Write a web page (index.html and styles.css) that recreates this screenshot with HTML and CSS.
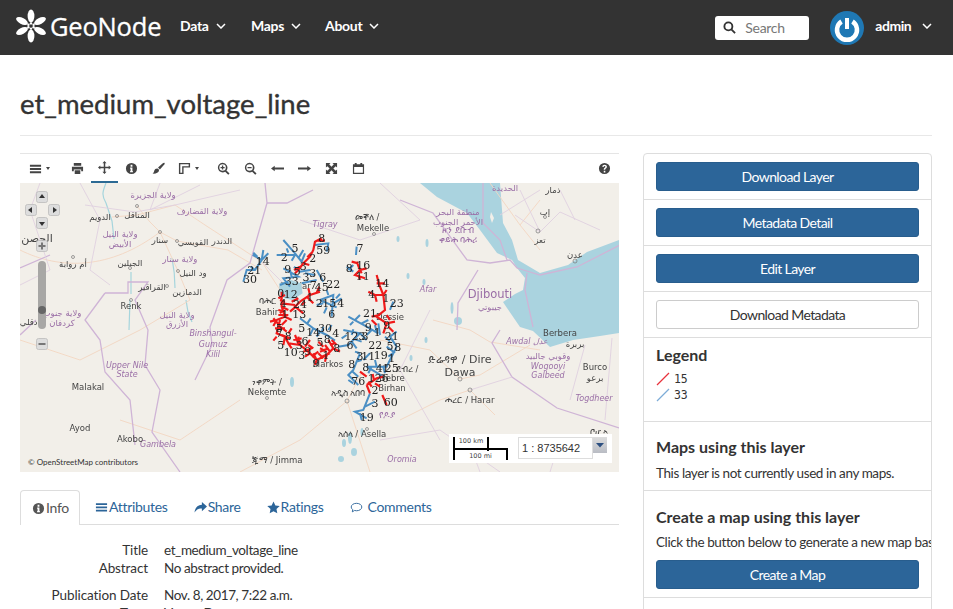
FILE: index.html
```html
<!DOCTYPE html>
<html lang="en">
<head>
<meta charset="utf-8">
<title>et_medium_voltage_line</title>
<link rel="stylesheet" href="styles.css">
</head>
<body>
<header class="navbar">
  <a class="brand">
    <svg class="brand-mark" viewBox="0 0 32 34" width="32" height="34">
      <g fill="#fff">
        <ellipse cx="16" cy="7" rx="3.4" ry="6.4"/>
        <ellipse cx="16" cy="27" rx="3.4" ry="6.4"/>
        <ellipse cx="7" cy="12" rx="3.2" ry="6.4" transform="rotate(-62 7 12)"/>
        <ellipse cx="25" cy="12" rx="3.2" ry="6.4" transform="rotate(62 25 12)"/>
        <ellipse cx="7" cy="22" rx="3.2" ry="6.4" transform="rotate(62 7 22)"/>
        <ellipse cx="25" cy="22" rx="3.2" ry="6.4" transform="rotate(-62 25 22)"/>
        <circle cx="16" cy="14.4" r="1.2"/><circle cx="16" cy="19.6" r="1.2"/>
        <circle cx="13.4" cy="15.7" r="1.2"/><circle cx="18.6" cy="15.7" r="1.2"/>
        <circle cx="13.4" cy="18.3" r="1.2"/><circle cx="18.6" cy="18.3" r="1.2"/>
      </g>
    </svg>
    <span class="brand-name">GeoNode</span>
  </a>
  <nav class="nav-main">
    <a class="nav-link">Data <svg class="chev" viewBox="0 0 10 6"><path d="M1 1l4 4 4-4"/></svg></a>
    <a class="nav-link nav-maps">Maps <svg class="chev" viewBox="0 0 10 6"><path d="M1 1l4 4 4-4"/></svg></a>
    <a class="nav-link">About <svg class="chev" viewBox="0 0 10 6"><path d="M1 1l4 4 4-4"/></svg></a>
  </nav>
  <div class="search">
    <svg class="search-icon" viewBox="0 0 14 14"><circle cx="5.8" cy="5.8" r="4.3"/><path d="M9 9l4 4"/></svg>
    <span class="search-text">Search</span>
  </div>
  <div class="avatar">
    <svg viewBox="0 0 34 34" width="34" height="34">
      <circle cx="17" cy="17" r="17" fill="#1f78b4"/>
      <path d="M11.500 10.500a10 10 0 1 0 11 0" fill="none" stroke="#fff" stroke-width="4.500"/>
      <path d="M17 7v11" stroke="#fff" stroke-width="4" fill="none"/>
    </svg>
  </div>
  <a class="nav-user">admin <svg class="chev" viewBox="0 0 10 6"><path d="M1 1l4 4 4-4"/></svg></a>
</header>

<main class="page">
  <h1 class="title">et_medium_voltage_line</h1>
  <div class="columns">
    <section class="left">
      <div class="toolbar">
        <span class="tool tool-wide tool-menu">
          <svg viewBox="0 0 14 14"><path d="M1 3h12v2H1zM1 6.500h12v2H1zM1 10h12v2H1z"/></svg><i class="caret"></i>
        </span>
        <span class="tool"><svg viewBox="0 0 14 14"><path d="M3 1h8v3H3zM1 5h12v5h-2V8H3v2H1zM4 9h6v4H4z"/></svg></span>
        <span class="tool tool-active"><svg viewBox="0 0 14 14"><path d="M7 0l2.200 2.500H7.800v3.700h3.700V4.800L14 7l-2.500 2.200V7.800H7.800v3.700h1.400L7 14l-2.200-2.500h1.400V7.800H2.500v1.400L0 7l2.500-2.200v1.400h3.700V2.500H4.800z"/></svg></span>
        <span class="tool"><svg viewBox="0 0 14 14"><path fill-rule="evenodd" d="M7 1a6 6 0 1 1 0 12A6 6 0 0 1 7 1zM6 3v2h2V3zM5.500 6v1.200H6v2.600h-.5V11h3V9.800H8V6z"/></svg></span>
        <span class="tool"><svg viewBox="0 0 14 14"><path d="M13.500 1c.5.500 0 1.500-1 2.500L8.500 8 6.500 6l4.500-4c1-.8 2-1.500 2.500-1zM5.500 7c1.500 0 2.300 1.200 2 2.500C7 11.500 4 13 .5 12.500c1.500-.8 1.500-2 2-3.300C3 8 4 7 5.500 7z"/></svg></span>
        <span class="tool tool-wide">
          <svg viewBox="0 0 14 14"><path fill-rule="evenodd" d="M1 1h12v5H6v7H1zM2.500 2.500v9h2V4.500h7v-2z"/></svg><i class="caret"></i>
        </span>
        <span class="tool"><svg viewBox="0 0 14 14"><path fill-rule="evenodd" d="M6 .8a5.200 5.200 0 0 1 4.200 8.300l3.300 3.300-1.400 1.400-3.300-3.300A5.200 5.200 0 1 1 6 .8zm0 1.700a3.500 3.500 0 1 0 0 7 3.500 3.500 0 0 0 0-7zM5.300 3.800h1.400v1.500h1.500v1.400H6.700v1.500H5.300V6.700H3.800V5.300h1.500z"/></svg></span>
        <span class="tool"><svg viewBox="0 0 14 14"><path fill-rule="evenodd" d="M6 .8a5.200 5.200 0 0 1 4.200 8.300l3.300 3.300-1.400 1.400-3.300-3.300A5.200 5.200 0 1 1 6 .8zm0 1.700a3.500 3.500 0 1 0 0 7 3.500 3.500 0 0 0 0-7zM3.800 5.300h4.400v1.400H3.800z"/></svg></span>
        <span class="tool"><svg viewBox="0 0 14 14"><path d="M0 7l4-3v2h10v2H4v2z"/></svg></span>
        <span class="tool"><svg viewBox="0 0 14 14"><path d="M14 7l-4-3v2H0v2h10v2z"/></svg></span>
        <span class="tool"><svg viewBox="0 0 14 14"><path d="M1 1h5L4.500 2.500 7 5l2.500-2.500L8 1h5v5l-1.500-1.500L9 7l2.500 2.500L13 8v5H8l1.500-1.500L7 9l-2.500 2.500L6 13H1V8l1.500 1.500L5 7 2.500 4.500 1 6z"/></svg></span>
        <span class="tool"><svg viewBox="0 0 14 14"><path fill-rule="evenodd" d="M1 2.500h2V1h2v1.500h4V1h2v1.500h2V13H1zM2.300 5.500v6.200h9.400V5.500z"/></svg></span>
        <span class="tool tool-help"><svg viewBox="0 0 14 14"><path fill-rule="evenodd" d="M7 1a6 6 0 1 1 0 12A6 6 0 0 1 7 1zM6.200 9.500v1.700h1.700V9.500zM7.100 3C5.700 3 4.800 3.800 4.600 5l1.500.3c.1-.6.400-.9 1-.9s.9.300.9.700c0 .4-.3.600-.8 1-.7.500-1 1-1 2v.2h1.600c0-.7.100-.9.800-1.400.6-.5 1-1 1-1.800C9.600 3.800 8.600 3 7.100 3z"/></svg></span>
      </div>

      <div class="map">
        <svg class="map-canvas" viewBox="20 183 599 289" width="599" height="289">
          <rect class="land" x="20" y="183" width="599" height="289"/>
          <path class="sea" d="M420,183L437,197L467,213L480,230L497,253L512,260L517,268L525,278L523,290L515,294L503,302L507,308L520,327L533,331L550,347L573,340L600,336L619,333L619,240L587,252L568,265L540,273L518,260L512,240L503,223L500,183Z"/>
          <path class="land" d="M491,212l3,6-2,5-2-6z"/>
          <g class="water">
            <path d="M106,183c-3,8-5,12 0,20l6,18 2,18"/>
            <path d="M172,258c2,10 3,16 3,30M186,300l2,12 4,10"/>
            <path d="M131,272v22M130,300l-1,30"/>
          </g>
          <g class="lakes">
            <ellipse cx="344" cy="443" rx="2" ry="4"/>
            <ellipse cx="350" cy="438" rx="2" ry="6"/>
            <ellipse cx="354" cy="452" rx="3" ry="4"/>
            <ellipse cx="341" cy="459" rx="3" ry="3"/>
            <ellipse cx="362" cy="432" rx="1.500" ry="4"/>
            <ellipse cx="292" cy="382" rx="2" ry="5"/>
            <ellipse cx="427" cy="243" rx="1.500" ry="4"/>
            <ellipse cx="424" cy="282" rx="1.500" ry="3"/>
            <ellipse cx="452" cy="308" rx="1.500" ry="6"/>
            <ellipse cx="458" cy="321" rx="4" ry="4"/>
            <ellipse cx="426" cy="340" rx="1.500" ry="3"/>
            <ellipse cx="398" cy="239" rx="1.500" ry="3"/>
            <ellipse cx="408" cy="276" rx="1.500" ry="3"/>
            <ellipse cx="411" cy="358" rx="1.500" ry="3"/>
          </g>
          <g class="roads">
            <path d="M20,250C60,270 110,270 160,232L177,241L228,250L262,270"/>
            <path d="M137,206L150,222L160,232M160,232L178,271L190,300"/>
            <path d="M112,217L137,215L175,205L205,225L262,262L280,290"/>
            <path d="M433,320L470,330L490,342L540,350M380,340L430,350L460,379L480,375L530,345"/>
            <path d="M347,401L362,372M347,401L370,472M347,401L300,440L240,472M490,183L520,225L540,250M540,200L520,225"/>
            <path d="M20,340L80,360L140,330L190,300M120,420L180,440L240,400M400,420L440,400L470,390L495,415"/>
          </g>
          <g class="borders">
            <path class="thick" d="M265,183L267,203L287,203L313,190M267,203L250,263L227,280L210,327L212,345L195,380M105,293L128,293L128,282L148,282L135,300L148,330L145,365L160,390L152,432L180,472"/>
            <path class="thick" d="M105,293L85,320L100,340L105,372L130,400L135,445"/>
            <path class="thick" d="M400,200L433,213L467,260L490,263L510,260L517,268L540,275L577,267L620,245M483,183V223L500,240L507,260M478,270L458,303L457,330M500,330L492,343L512,377L557,408L619,428M527,273L525,290L533,327"/>
            <path class="thick" d="M20,335L36,320M20,268L50,255"/>
            <path d="M515,215L540,232L560,212L600,230M520,190L540,232M560,190L575,220M540,190L500,215"/>
            <path d="M470,390L512,377M570,400L585,345M605,420L612,338"/>
            <path d="M40,183L30,210L50,270L20,285M80,183L100,220L90,270L110,285M160,183L150,210L200,185M85,205L135,212L175,205L240,190"/>
            <path d="M300,220L360,240L420,220L380,183M300,300L260,260M430,310L400,370L440,440M380,440L440,430L500,472M470,445L480,472M560,440L550,472"/>
          </g>
          <g class="lbl-region">
            <text x="153" y="198">ولاية الجزيرة</text>
            <text x="202" y="214">ولاية القضارف</text>
            <text x="120" y="237">ولاية النيل</text>
            <text x="120" y="247">الأبيض</text>
            <text x="180" y="262">ولاية سنار</text>
            <text x="177" y="318">ولاية النيل</text>
            <text x="177" y="327">الأزرق</text>
            <text x="62" y="316">ولاية جنوب</text>
            <text x="62" y="326">كردفان</text>
            <text x="127" y="368" class="it">Upper Nile</text>
            <text x="127" y="377" class="it">State</text>
            <text x="213" y="336" class="it">Binshangul-</text>
            <text x="213" y="347" class="it">Gumuz</text>
            <text x="213" y="357" class="it">Kilil</text>
            <text x="325" y="227" class="it">Tigray</text>
            <text x="428" y="292" class="it">Afar</text>
            <text x="527" y="344" class="it">Awdal عدل</text>
            <text x="548" y="359">وقوبي جالبيد</text>
            <text x="548" y="369" class="it">Wogooyi</text>
            <text x="548" y="378" class="it">Galbeed</text>
            <text x="594" y="401" class="it">Togdheer</text>
            <text x="402" y="462" class="it">Oromia</text>
            <text x="158" y="447" class="it">Gambela</text>
            <text x="458" y="215">منطقة البحر</text>
            <text x="458" y="225">الأحمر الجنوب</text>
            <text x="458" y="233">ዞን ደቡብ</text>
            <text x="458" y="243">ቀይሕ ባሕሪ</text>
            <text x="490" y="298" class="big">Djibouti</text>
            <text x="490" y="310">جيبوتي</text>
            <text x="387" y="418">የዶያ</text>
          </g>
          <g class="lbl-city">
            <text x="100" y="220">الدويم</text>
            <text x="137" y="218">المناقل</text>
            <text x="160" y="243">سنار</text>
            <text x="193" y="245">القويسي</text>
            <text x="222" y="244">الدندر</text>
            <text x="130" y="266">الجبلين</text>
            <text x="73" y="267">أم روابة</text>
            <text x="193" y="276">ود النيل</text>
            <text x="152" y="290">القراقير</text>
            <text x="187" y="295">الدمازين</text>
            <text x="131" y="309">Renk</text>
            <text x="37" y="242" class="big">الحصن</text>
            <text x="32" y="325">كادقلي</text>
            <text x="88" y="390">Malakal</text>
            <text x="80" y="431">Ayod</text>
            <text x="130" y="442">Akobo</text>
            <text x="367" y="220">መቐለ /</text>
            <text x="373" y="231">Mekelle</text>
            <text x="267" y="304">ባሕር</text>
            <text x="267" y="315">Bahir</text>
            <text x="295" y="289">Gondar</text>
            <text x="390" y="320">Dessie</text>
            <text x="267" y="385">ነቀምት /</text>
            <text x="267" y="395">Nekemte</text>
            <text x="328" y="367">Markos</text>
            <text x="407" y="372">ደብረ /</text>
            <text x="392" y="381">Debre</text>
            <text x="392" y="391">Birhan</text>
            <text x="348" y="396">አዲስ አበባ</text>
            <text x="460" y="363" class="big">ድሬዳዋ / Dire</text>
            <text x="460" y="376" class="big">Dawa</text>
            <text x="470" y="403">ሐረር / Harar</text>
            <text x="362" y="437">አሰላ / Asella</text>
            <text x="277" y="463">ጂማ / Jimma</text>
            <text x="560" y="336">Berbera</text>
            <text x="575" y="347">بربرة</text>
            <text x="595" y="370">Burco</text>
            <text x="595" y="381">برعو</text>
            <text x="599" y="435">ቦሆ.ኣ</text>
            <text x="553" y="193">ذمار</text>
            <text x="545" y="215">إب</text>
            <text x="540" y="243">تعز</text>
            <text x="575" y="258">عدن</text>
            <text x="505" y="191" class="pur">الحديدة</text>
          </g>
          <g class="dots">
            <circle cx="117" cy="216" r="1.500"/><circle cx="137" cy="206" r="1.500"/><circle cx="160" cy="232" r="1.500"/>
            <circle cx="177" cy="241" r="1.500"/><circle cx="178" cy="271" r="1.500"/><circle cx="167" cy="286" r="1.500"/>
            <circle cx="131" cy="300" r="1.500"/><circle cx="73" cy="257" r="1.500"/><circle cx="130" cy="268" r="1.500"/>
            <circle cx="538" cy="231" r="2"/><circle cx="575" cy="261" r="2"/><circle cx="460" cy="379" r="2"/>
            <circle cx="470" cy="390" r="2"/><circle cx="347" cy="401" r="2"/><circle cx="267" cy="398" r="1.500"/>
            <circle cx="374" cy="234" r="1.500"/><circle cx="545" cy="217" r="1.500"/><circle cx="367" cy="429" r="1.500"/>
          </g>
          <g transform="translate(220 220) scale(.3333)">
            <path class="lake" d="M178,190l35-10 30,10 5,30-30,20-25-5-15-20z"/>
            <g class="net-blue">
              <path d="M190,60L225,100L245,125L255,100M170,105L225,105L215,122M200,85L205,98M235,115L250,90"/>
              <path d="M98,105L125,120L105,150L80,150L70,185M125,120L130,90M125,120L145,100M105,150L92,140M112,110L100,98"/>
              <path d="M190,145L235,170L190,175L210,200M210,150L215,170M255,160L285,165M285,75L325,70L320,95M180,195L205,185M222,140L240,155L270,150M245,190L290,180M290,150L310,185"/>
              <path d="M240,295L280,325L320,345L345,362M300,335L290,350M325,330L335,315M262,310L272,295M280,325L270,345M305,338L310,320"/>
              <path d="M300,240L340,225L335,290M340,250L365,235M300,240L350,262M325,225L320,210M320,262L312,280M348,235L360,222M290,255L310,250"/>
              <path d="M385,290L440,320L475,340M405,300L420,285M425,310L445,300M455,330L440,345M400,305L390,315M470,335L465,315"/>
              <path d="M370,330L420,340L385,375L355,380M400,328L395,345M420,340L440,360M405,358L425,365M380,345L365,355M395,365L410,385"/>
              <path d="M420,400L400,450L385,465L415,495M420,400L405,395M410,425L425,420M398,455L415,470M430,420L450,400M385,480L400,490"/>
              <path d="M440,440L500,440L530,380L510,350L530,335M500,380L520,395M515,410L505,430M470,440L465,420M490,440L495,460M495,350L510,365M525,395L505,410M455,440L445,460"/>
              <path d="M440,440L490,470M450,520L430,570L405,575L440,595M420,580L425,600M510,270L520,245M435,560L465,545"/>
              <path d="M380,140L400,155M385,150L400,135M410,80L408,105M475,310L480,345"/>
            </g>
            <g class="net-red">
              <path d="M305,55L285,65L280,90L270,110L250,130L235,150L225,160M278,95L262,112M250,130L268,135M290,62L315,62M240,140L222,150"/>
              <path d="M185,215L185,260L195,290L170,300L150,305M195,225L175,235M185,260L205,270M195,290L215,300M170,300L160,318M180,240L195,245M205,285L175,285M190,270L180,280M160,295L175,312M200,300L185,315M175,270L195,275"/>
              <path d="M180,300L170,340L195,350L205,370L240,375L265,395L290,420L320,405L340,385L325,360M165,325L195,325M170,350L160,362M195,350L190,375M205,340L215,325M205,370L215,385M240,375L235,350M255,380L270,360M290,420L280,400M290,420L285,435M320,405L315,425M340,385L360,395M310,380L295,365M325,385L300,395M175,315L200,335M220,360L245,355M270,400L255,410M305,410L330,400M300,385L320,395M280,385L265,375M345,370L330,375M185,345L210,355M225,345L235,370M250,395L275,385M295,400L310,415M275,410L295,395M335,360L350,375M315,375L330,395"/>
              <path d="M240,245L225,260L250,280M240,245L270,225L300,215M185,250L225,255M262,232L280,250M270,225L265,205M290,218L298,200M225,262L210,275M245,255L255,245M235,235L215,245"/>
              <path d="M470,165L478,195L490,225L465,225L445,215M470,190L495,190M490,225L500,210M465,225L470,245"/>
              <path d="M490,225L495,270L470,290L500,310L525,305M480,285L455,290M500,310L490,340M505,320L520,335M500,285L510,300M455,300L470,315"/>
              <path d="M410,125L420,150L405,165L435,175M395,125L415,130M420,150L440,145M420,150L425,160M415,165L420,178"/>
              <path d="M440,495L470,475L490,470M440,495L450,520M462,480L458,462M465,490L480,500M420,455L440,470M487,525L500,555M445,485L455,500"/>
            </g>
            <g class="nums">
              <text x="305" y="67">8</text><text x="225" y="97">5</text><text x="310" y="102">59</text><text x="193" y="122">2</text><text x="278" y="125">2</text><text x="128" y="134">14</text><text x="103" y="162">21</text><text x="90" y="190">30</text><text x="203" y="160">9</text><text x="232" y="164">5</text><text x="250" y="149">3</text><text x="278" y="172">3</text><text x="308" y="184">6</text><text x="215" y="195">33</text><text x="258" y="184">3</text><text x="280" y="207">7</text><text x="305" y="214">45</text><text x="340" y="204">22</text>
              <text x="420" y="97">7</text><text x="388" y="155">8</text><text x="430" y="147">16</text><text x="428" y="180">11</text><text x="487" y="200">14</text><text x="455" y="234">4</text><text x="498" y="247">1</text><text x="530" y="262">23</text>
              <text x="182" y="232">0</text><text x="212" y="234">12</text><text x="270" y="242">1</text><text x="298" y="262">2</text><text x="328" y="262">15</text><text x="362" y="260">4</text><text x="335" y="294">6</text><text x="190" y="260">4</text><text x="240" y="264">24</text><text x="195" y="294">1</text><text x="238" y="294">13</text><text x="450" y="292">21</text>
              <text x="245" y="337">5</text><text x="280" y="347">14</text><text x="315" y="337">30</text><text x="347" y="350">4</text><text x="445" y="334">9</text><text x="472" y="347">1</text><text x="500" y="327">9</text><text x="515" y="360">21</text><text x="405" y="360">123</text><text x="435" y="360">3</text><text x="466" y="387">22</text><text x="390" y="387">6</text><text x="510" y="390">5</text><text x="533" y="392">8</text>
              <text x="178" y="337">5</text><text x="178" y="350">7</text><text x="205" y="360">8</text><text x="255" y="374">6</text><text x="238" y="387">3</text><text x="182" y="387">5</text><text x="212" y="407">10</text><text x="245" y="417">3</text><text x="263" y="404">9</text><text x="300" y="377">5</text><text x="322" y="370">8</text><text x="350" y="397">8</text><text x="318" y="417">1</text><text x="288" y="440">9</text>
              <text x="420" y="419">3</text><text x="445" y="420">11</text><text x="482" y="417">19</text><text x="515" y="427">1</text><text x="395" y="444">8</text><text x="437" y="452">8</text><text x="478" y="457">4</text><text x="497" y="457">1</text><text x="515" y="457">25</text><text x="415" y="494">76</text><text x="475" y="487">126</text><text x="465" y="522">2</text><text x="512" y="557">60</text><text x="465" y="562">3</text><text x="440" y="602">19</text>
            </g>
          </g>
          <g class="osm-control">
            <rect x="36.500" y="191.500" width="11" height="11" rx="2"/><path d="M42,194l3,4h-6z"/>
            <rect x="25.500" y="204.500" width="11" height="11" rx="2"/><path d="M28,210l4-3v6z"/>
            <rect x="48.500" y="204.500" width="11" height="11" rx="2"/><path d="M57,210l-4-3v6z"/>
            <rect x="36.500" y="217.500" width="11" height="11" rx="2"/><path d="M42,226l3-4h-6z"/>
            <rect x="36.500" y="240.500" width="11" height="11" rx="2"/><path class="sym" d="M38.500,246h7M42,242.500v7"/>
            <rect class="slider" x="38" y="261" width="8" height="68" rx="4"/>
            <circle class="handle" cx="42" cy="310" r="4"/>
            <rect x="36.500" y="338.500" width="11" height="11" rx="2"/><path class="sym" d="M38.500,344h7"/>
          </g>
        </svg>
        <span class="attribution">© OpenStreetMap contributors</span>
        <div class="scale-box">
          <div class="scale-bar">
            <span class="scale-km">100 km</span>
            <span class="scale-mi">100 mi</span>
          </div>
          <div class="scale-input">1 : 8735642</div>
          <div class="scale-btn"><svg viewBox="0 0 8 5" width="8" height="5"><path d="M0 0l4 4.500L8 0z"/></svg></div>
        </div>
      </div>

      <ul class="tabs">
        <li class="tab tab-on">
          <svg class="ti" viewBox="0 0 14 14"><path fill-rule="evenodd" d="M7 1a6 6 0 1 1 0 12A6 6 0 0 1 7 1zM6 3v2h2V3zM5.500 6v1.200H6v2.600h-.5V11h3V9.800H8V6z"/></svg>Info
        </li>
        <li class="tab tab-first"><svg class="ti" viewBox="0 0 14 14"><path d="M1 2.500h12v1.800H1zM1 6h12v1.800H1zM1 9.500h12v1.800H1z"/></svg>Attributes</li>
        <li class="tab"><svg class="ti" viewBox="0 0 14 14"><path d="M8.500 1L14 6l-5.500 5V8C5 8 2.500 9 .5 12.500.8 8 3.500 4.200 8.500 4z"/></svg>Share</li>
        <li class="tab"><svg class="ti" viewBox="0 0 14 14"><path d="M7 .5l2 4.300 4.700.6-3.500 3.200.9 4.700L7 11l-4.100 2.300.9-4.700L.3 5.400 5 4.800z"/></svg>Ratings</li>
        <li class="tab"><svg class="ti ti-line" viewBox="0 0 14 14"><path d="M7 2.500c3.300 0 5.700 1.700 5.700 4s-2.400 4-5.700 4c-.8 0-1.500-.1-2.100-.3L2.500 11.700l.4-2.400C1.900 8.500 1.300 7.600 1.300 6.500c0-2.300 2.400-4 5.700-4z"/></svg>Comments</li>
      </ul>

      <dl class="info">
        <dt>Title</dt><dd>et_medium_voltage_line</dd>
        <dt>Abstract</dt><dd>No abstract provided.</dd>
        <dt class="gap">Publication Date</dt><dd class="gap">Nov. 8, 2017, 7:22 a.m.</dd>
        <dt>Type</dt><dd>Vector Data</dd>
      </dl>
    </section>

    <aside class="panel">
      <div class="row row-btn"><a class="btn">Download Layer</a></div>
      <div class="row row-btn"><a class="btn">Metadata Detail</a></div>
      <div class="row row-btn"><a class="btn">Edit Layer</a></div>
      <div class="row row-btn"><a class="btn btn-plain">Download Metadata</a></div>
      <div class="row row-legend">
        <h4 class="legend-head">Legend</h4>
        <div class="legend-item"><svg viewBox="0 0 14 14" width="14" height="14"><path class="lg-red" d="M1 13L13 1"/></svg><span>15</span></div>
        <div class="legend-item"><svg viewBox="0 0 14 14" width="14" height="14"><path class="lg-blue" d="M1 13L13 1"/></svg><span>33</span></div>
      </div>
      <div class="row row-maps">
        <h4 class="head">Maps using this layer</h4>
        <p class="copy">This layer is not currently used in any maps.</p>
      </div>
      <div class="row row-create">
        <h4 class="head">Create a map using this layer</h4>
        <p class="copy">Click the button below to generate a new map based on this layer.</p>
        <a class="btn">Create a Map</a>
      </div>
    </aside>
  </div>
</main>
</body>
</html>
```
FILE: styles.css
```css
* { box-sizing: border-box; }
html, body { margin: 0; height: 609px; overflow: hidden; }
body { font-family: Lato, "Noto Sans", sans-serif; font-size: 14px; color: #333; background: #fff; }

.navbar { height: 55px; background: #333; color: #fff; display: flex; align-items: center; }
.brand { display: flex; align-items: center; margin-left: 15px; width: 165px; padding-bottom: 3px; }
.brand-mark { flex: none; }
.brand-name { font-family: "Open Sans", Lato, sans-serif; font-size: 25.500px; margin-left: 3px; letter-spacing: -.2px; -webkit-text-stroke: .3px #fff; }
.nav-main { display: flex; padding-bottom: 4px; }
.nav-link { font-weight: 700; font-size: 14px; width: 71px; white-space: nowrap; letter-spacing: -.3px; }
.nav-maps { width: 74px; }
.nav-link:last-child { width: auto; }
.chev { width: 10px; height: 6px; margin-left: 4px; vertical-align: 2px; fill: none; stroke: #fff; stroke-width: 1.500; }
.search { margin-left: auto; width: 94px; height: 24px; background: #fff; border-radius: 3px; display: flex; align-items: center; padding: 0 0 1px 8px; }
.search-icon { width: 13px; height: 13px; fill: none; stroke: #333; stroke-width: 2; }
.search-text { color: #777; margin-left: 9px; font-size: 14px; letter-spacing: -.3px; }
.avatar { margin-left: 21px; width: 34px; height: 34px; }
.nav-user { margin-left: 11px; margin-right: 21px; font-weight: 700; font-size: 14px; white-space: nowrap; letter-spacing: -.5px; padding-bottom: 4px; }
.nav-user .chev { margin-left: 8px; }

.page { padding: 0 21px 0 20px; }
.title { margin: 0; height: 81px; border-bottom: 1px solid #e8e8e8; padding-top: 33px; font-size: 27.500px; line-height: 32px; font-weight: 400; color: #333; -webkit-text-stroke: .35px #333; }
.columns { display: flex; justify-content: space-between; margin-top: 17px; }

.left { width: 599px; flex: none; }
.toolbar { height: 30px; border-top: 1px solid #e5e5e5; display: flex; align-items: center; padding-left: 6px; }
.tool { width: 27px; height: 29px; display: flex; align-items: center; justify-content: center; flex: none; }
.tool svg { width: 13px; height: 13px; fill: #444; }
.tool-wide { width: 38px; justify-content: flex-start; padding-left: 6px; }
.tool-menu { padding-left: 3px; }
.caret { width: 0; height: 0; border: 2.500px solid transparent; border-top: 3px solid #444; border-bottom: 0; margin-left: 4px; }
.tool-active { border-bottom: 2px solid #2c6a94; }
.tool-help { margin-left: auto; margin-right: 1px; }

.map { position: relative; width: 599px; height: 289px; overflow: hidden; }
.map-canvas { display: block; filter: blur(.35px); }
.land { fill: #f2efe9; }
.sea { fill: #aad3df; }
.lake { fill: #aad3df; }
.lakes ellipse { fill: #aad3df; }
.water path { fill: none; stroke: #a6d5dd; stroke-width: 1.200; }
.roads path { fill: none; stroke: #f3d6c2; stroke-width: .9; }
.borders path { fill: none; stroke: #e0d0e0; stroke-width: .9; }
.borders .thick { stroke: #cfb4d6; stroke-width: 1.300; }
.lbl-region text { font: 8.500px "DejaVu Sans", sans-serif; fill: #9a6ea6; text-anchor: middle; }
.lbl-region .it { font-style: italic; font-size: 8px; }
.lbl-region .big { font-size: 11.500px; }
.lbl-city text { font: 8.500px "DejaVu Sans", sans-serif; fill: #444; text-anchor: middle; }
.lbl-city .big { font-size: 11px; }
.lbl-city .pur { fill: #9a6ea6; }
.dots circle { fill: none; stroke: #777; stroke-width: .7; }
.net-blue path { fill: none; stroke: #4b8fc4; stroke-width: 6; }
.net-red path { fill: none; stroke: #f01a1a; stroke-width: 6.500; }
.nums text { font: 33px "DejaVu Serif", serif; fill: #222; text-anchor: middle; }
.osm-control rect { fill: #ddd; stroke: #bbb; stroke-width: .8; }
.osm-control path { fill: #333; }
.osm-control .sym { fill: none; stroke: #777; stroke-width: 2; }
.osm-control .slider { fill: #a8a7a5; stroke: none; }
.osm-control .handle { fill: #666; }

.attribution { position: absolute; left: 8px; bottom: 5px; font-size: 8px; line-height: 10px; color: #333; white-space: nowrap; }
.scale-box { position: absolute; left: 429px; top: 251px; width: 163px; height: 29px; background: #fff; display: flex; }
.scale-bar { position: relative; width: 65px; height: 29px; margin-left: 4px; }
.scale-km, .scale-mi { position: absolute; font-size: 6.500px; line-height: 9px; color: #444; font-family: "DejaVu Sans", sans-serif; text-align: center; }
.scale-km { left: 0; top: 3px; width: 36px; height: 14px; border-left: 2px solid #000; border-right: 2px solid #000; }
.scale-mi { left: 0; top: 14px; width: 55px; height: 12px; border-top: 2px solid #000; border-left: 2px solid #000; border-right: 2px solid #000; padding-top: 2px; }
.scale-input { width: 75px; height: 22px; margin-top: 3px; border: 1px solid #ddd; font: 11px/20px "Liberation Sans", sans-serif; padding-left: 3px; color: #333; }
.scale-btn { width: 14px; height: 16px; margin-top: 3px; background: linear-gradient(#ddd, #b9bcc4); display: flex; align-items: center; justify-content: center; }
.scale-btn path { fill: #2c4f80; }

.tabs { list-style: none; margin: 18px 0 0; padding: 0; height: 35px; display: flex; border-bottom: 1px solid #ddd; }
.tab { height: 34px; padding: 0 13px; font-size: 14px; line-height: 34px; color: #2c6599; display: flex; align-items: center; white-space: nowrap; letter-spacing: -.3px; }
.tab-on { width: 60px; padding: 0 0 0 11px; color: #555; border: 1px solid #ddd; border-bottom: 0; border-radius: 4px 4px 0 0; height: 35px; background: #fff; }
.tab-first { margin-left: 2px; }
.ti { width: 13px; height: 13px; margin-right: 1px; fill: #2c6599; flex: none; }
.tab-on .ti { fill: #555; }
.ti-line { fill: none; stroke: #2c6599; stroke-width: 1; margin-right: 5px; }

.info { display: grid; grid-template-columns: 128px 1fr; column-gap: 16px; margin: 16px 0 0; line-height: 18px; font-size: 13.500px; letter-spacing: -.4px; }
.info dt { text-align: right; color: #333; letter-spacing: -.1px; }
.info dd { margin: 0; color: #333; }
.info .gap { margin-top: 9px; }

.panel { width: 289px; height: 520px; flex: none; border: 1px solid #ddd; border-radius: 4px; overflow: hidden; }
.row { border-bottom: 1px solid #ddd; padding: 0 12px; white-space: nowrap; overflow: hidden; }
.row-btn { height: 46px; padding-top: 8px; }
.btn { display: block; height: 29px; line-height: 27px; background: #2c6599; border: 1px solid #285d8d; border-radius: 3px; color: #fff; text-align: center; font-size: 14px; letter-spacing: -.6px; }
.btn-plain { background: #fff; border-color: #ccc; color: #333; }
.row-legend { height: 84px; padding-top: 7px; }
.legend-head { margin: 0 0 6px; font-size: 16px; line-height: 20px; font-weight: 700; }
.legend-item { height: 16px; display: flex; align-items: center; }
.legend-item span { font: 11.500px "DejaVu Sans Mono", monospace; margin-left: 4px; color: #333; letter-spacing: -.1px; }
.lg-red { stroke: #e8323c; stroke-width: 1.300; }
.lg-blue { stroke: #7dacd8; stroke-width: 1.300; }
.row-maps { height: 69px; padding-top: 15px; }
.row-create { height: 107px; padding-top: 16px; }
.head { margin: 0; font-size: 16px; line-height: 20px; font-weight: 700; }
.copy { margin: 6px 0 0; font-size: 13.500px; line-height: 18px; letter-spacing: -.4px; }
.row-maps .copy { margin-top: 7px; }
.row-create .copy { margin: 6px 0 9px; }
```
